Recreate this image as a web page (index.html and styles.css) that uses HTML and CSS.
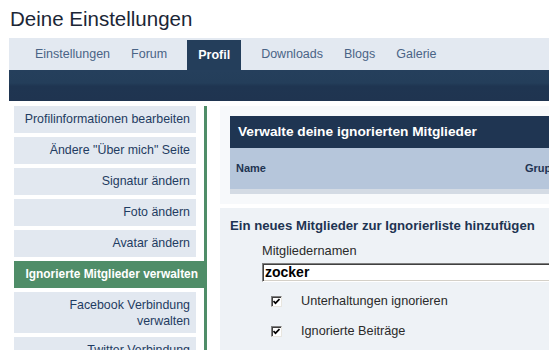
FILE: index.html
```html
<!DOCTYPE html>
<html lang="de">
<head>
<meta charset="utf-8">
<title>Deine Einstellungen</title>
<link rel="stylesheet" href="styles.css">
</head>
<body>
<h1 class="title">Deine Einstellungen</h1>
<div class="page">
  <nav class="tabs">
    <a class="tab">Einstellungen</a>
    <a class="tab">Forum</a>
    <a class="tab tab-active">Profil</a>
    <a class="tab">Downloads</a>
    <a class="tab">Blogs</a>
    <a class="tab">Galerie</a>
  </nav>
  <div class="subbar"></div>
  <div class="layout">
    <aside class="sidebar">
      <a class="side-item">Profilinformationen bearbeiten</a>
      <a class="side-item">Ändere "Über mich" Seite</a>
      <a class="side-item">Signatur ändern</a>
      <a class="side-item">Foto ändern</a>
      <a class="side-item">Avatar ändern</a>
      <a class="side-item side-active">Ignorierte Mitglieder verwalten</a>
      <a class="side-item">Facebook Verbindung<br>verwalten</a>
      <a class="side-item">Twitter Verbindung<br>verwalten</a>
    </aside>
    <main class="main">
      <section class="panel panel-list">
        <div class="list-head">Verwalte deine ignorierten Mitglieder</div>
        <div class="list-cols">
          <span class="col-name">Name</span>
          <span class="col-group">Gruppe</span>
        </div>
        <div class="list-foot"></div>
      </section>
      <section class="panel panel-form">
        <h2 class="form-title">Ein neues Mitglieder zur Ignorierliste hinzufügen</h2>
        <div class="field">
          <label class="field-label">Mitgliedernamen</label>
          <div class="text-input">zocker</div>
          <div class="check-row">
            <span class="cb"><svg width="7" height="7" viewBox="0 0 7 7"><path d="M0.5 3 L2.5 5.2 L6.5 1" fill="none" stroke="#000" stroke-width="1.7"/></svg></span>
            <span class="check-label">Unterhaltungen ignorieren</span>
          </div>
          <div class="check-row">
            <span class="cb"><svg width="7" height="7" viewBox="0 0 7 7"><path d="M0.5 3 L2.5 5.2 L6.5 1" fill="none" stroke="#000" stroke-width="1.7"/></svg></span>
            <span class="check-label">Ignorierte Beiträge</span>
          </div>
        </div>
      </section>
    </main>
  </div>
</div>
</body>
</html>
```

FILE: styles.css
```css
html, body {
  margin: 0;
  padding: 0;
  overflow: hidden;
  background: #ffffff;
}
body {
  font-family: "Liberation Sans", Arial, sans-serif;
  width: 549px;
  height: 350px;
}
.title {
  margin: 0;
  padding: 7px 0 0 10px;
  font-size: 20.5px;
  line-height: 24px;
  font-weight: normal;
  color: #1b2636;
}
.page {
  margin-top: 7px;
  padding-left: 9px;
  width: 700px;
}
.tabs {
  display: flex;
  height: 32px;
  background: #e3e9f1;
  padding-left: 16px;
  gap: 1px;
}
.tab {
  display: block;
  padding: 0 10px;
  font-size: 12.5px;
  line-height: 32px;
  color: #4a6486;
}
.tab-active {
  margin: 2px 9px 0 9px;
  padding: 0 11px;
  line-height: 30px;
  background: #243e5b;
  color: #ffffff;
  font-weight: bold;
}
.subbar {
  height: 31px;
  background: linear-gradient(#253f5c 0%, #243e5a 42%, #1f3551 52%, #1f3450 100%);
}
.layout {
  display: flex;
  padding-top: 5px;
}
.sidebar {
  width: 190px;
  padding-left: 5px;
  border-right: 3px solid #4f8d68;
  display: flex;
  flex-direction: column;
  gap: 4px;
}
.side-item {
  display: block;
  width: 182px;
  box-sizing: border-box;
  min-height: 27px;
  padding: 4.5px 6px;
  text-align: right;
  font-size: 12.4px;
  line-height: 16px;
  color: #1f3c62;
  background: #e2e8f0;
}
.side-active {
  width: 190px;
  padding-right: 6px;
  white-space: nowrap;
  font-size: 11.9px;
  background: #4f8d68;
  color: #ffffff;
  font-weight: bold;
}
.main {
  margin-left: 13px;
  width: 420px;
  display: flex;
  flex-direction: column;
  gap: 4px;
}
.panel-list {
  background: #f7f9fb;
  padding: 10px 0 10px 10px;
}
.list-head {
  height: 32px;
  padding-left: 8px;
  line-height: 32px;
  font-size: 13.7px;
  font-weight: bold;
  color: #ffffff;
  background: #1f3552;
}
.list-cols {
  display: grid;
  grid-template-columns: 289px 1fr;
  height: 41px;
  line-height: 41px;
  background: #b6c6db;
  font-size: 11px;
  font-weight: bold;
  color: #1e3452;
}
.col-name, .col-group {
  padding-left: 6px;
}
.list-foot {
  height: 5px;
  background: #d4dbe4;
}
.panel-form {
  background: #eef2f6;
  padding: 10px;
  min-height: 200px;
}
.form-title {
  margin: 0;
  font-size: 13.2px;
  line-height: 16px;
  font-weight: bold;
  color: #1e3452;
}
.field {
  padding-left: 32px;
}
.field-label {
  display: block;
  margin-top: 9px;
  font-size: 12.8px;
  line-height: 16px;
  color: #2a2a2a;
}
.text-input {
  margin-top: 4px;
  margin-bottom: 4px;
  height: 19px;
  box-sizing: border-box;
  padding-left: 2px;
  background: #ffffff;
  border: 1px solid;
  border-color: #7f7f7f #ffffff #ffffff #7f7f7f;
  box-shadow: inset 1px 1px 0 #404040, inset -1px -1px 0 #d4d0c8;
  font-size: 14px;
  font-weight: bold;
  line-height: 17px;
  color: #000000;
}
.check-row {
  display: flex;
  align-items: center;
  height: 30px;
  padding-left: 9px;
}
.cb {
  width: 11px;
  height: 11px;
  box-sizing: border-box;
  display: flex;
  align-items: center;
  justify-content: center;
  background: #ffffff;
  border: 1px solid;
  border-color: #808080 #e8e6e0 #e8e6e0 #808080;
  box-shadow: inset 1px 1px 0 #404040;
}
.check-label {
  margin-left: 19px;
  font-size: 12.7px;
  color: #2a2a2a;
}
```
